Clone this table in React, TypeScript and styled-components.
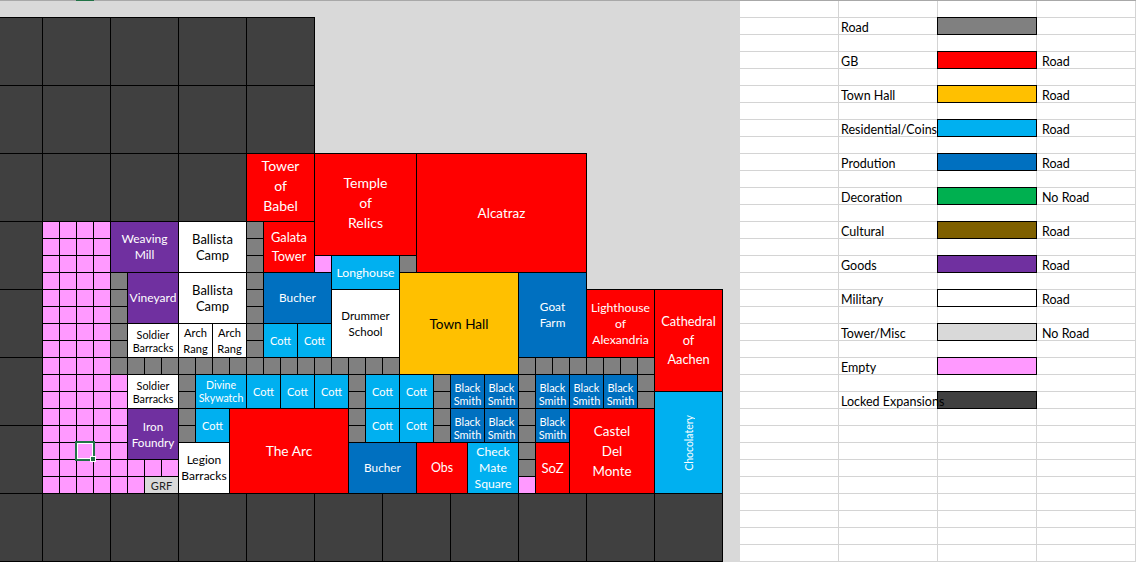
import React from 'react';
import styled, { createGlobalStyle } from 'styled-components';

const GlobalStyle = createGlobalStyle`
  html, body {
    margin: 0;
    padding: 0;
    background: #fff;
  }
`;

const Page = styled.div`
  width: 1136px;
  height: 562px;
  overflow: hidden;
  display: flex;
  flex-direction: column;
  font-family: Lato, 'Liberation Sans', sans-serif;
`;

const HeaderRule = styled.div`
  flex: none;
  height: 1px;
  display: flex;
  background: #a8a8a8;
`;

const ColumnMark = styled.div`
  margin-left: 76px;
  width: 18px;
  background: #217346;
`;

const Panes = styled.div`
  flex: 1;
  display: flex;
  min-height: 0;
`;

const MapPane = styled.div`
  flex: none;
  width: 740px;
  padding-top: 16px;
  box-sizing: border-box;
  background: #d9d9d9;
`;

const MapGrid = styled.div`
  display: grid;
  grid-template-columns: 42px repeat(40, 17px);
  grid-template-rows: repeat(32, 17px);
`;

interface Place {
  $c: number;
  $r: number;
  $w?: number;
  $h?: number;
}

// c = -1 is the cut-off strip on the left edge
const Tile = styled.div<Place & { $fill: string }>`
  grid-column: ${({ $c, $w = 1 }) => ($c < 0 ? '1 / span 1' : `${$c + 2} / span ${$w}`)};
  grid-row: ${({ $r, $h = 1 }) => `${$r + 1} / span ${$h}`};
  background: ${({ $fill }) => $fill};
  border: 1px solid #000;
  border-left-width: ${({ $c }) => ($c < 0 ? 0 : 1)}px;
  margin: 0 -1px -1px 0;
  box-sizing: border-box;
`;

const Building = styled(Tile)<{ $ink: string; $fs: number; $lh: number; $nudge: number }>`
  display: flex;
  align-items: center;
  justify-content: center;
  text-align: center;
  white-space: pre-line;
  color: ${({ $ink }) => $ink};
  font-size: ${({ $fs }) => $fs}px;
  line-height: ${({ $lh }) => $lh}px;
  padding-top: ${({ $nudge }) => Math.max($nudge, 0) * 2}px;
  padding-bottom: ${({ $nudge }) => Math.max(-$nudge, 0) * 2}px;
  overflow: visible;
`;

const VerticalLabel = styled.span`
  writing-mode: vertical-rl;
  transform: rotate(180deg);
`;

const ActiveCell = styled(Tile)`
  position: relative;
  z-index: 2;

  &::before {
    content: '';
    position: absolute;
    inset: -2px;
    border: 2px solid #217346;
    box-shadow: inset 0 0 0 1px #fff;
  }

  &::after {
    content: '';
    position: absolute;
    right: -3px;
    bottom: -3px;
    width: 6px;
    height: 6px;
    box-sizing: border-box;
    background: #217346;
    border: 1px solid #fff;
  }
`;

const Sheet = styled.div`
  flex: none;
  width: 396px;
  display: grid;
  grid-template-columns: repeat(4, 99px);
  grid-auto-rows: 17px;
  align-content: start;
  color: #000;
  font-size: 12.5px;
  line-height: 16px;
`;

const SheetCell = styled.div<{ $indent?: number }>`
  border-right: 1px solid #d4d4d4;
  border-bottom: 1px solid #d4d4d4;
  box-sizing: border-box;
  padding: 2px 0 0 ${({ $indent = 2 }) => $indent}px;
  white-space: nowrap;
`;

const CellText = styled.span`
  position: relative;
  z-index: 1;
`;

const Swatch = styled.div<{ $fill: string }>`
  margin: -1px 0 0 -1px;
  border: 1px solid #000;
  box-sizing: border-box;
  background: ${({ $fill }) => $fill};
`;

const COLORS = {
  red: ['#ff0000', '#fff'],
  gold: ['#ffc000', '#000'],
  sky: ['#00b0f0', '#fff'],
  blue: ['#0070c0', '#fff'],
  purple: ['#7030a0', '#fff'],
  white: ['#ffffff', '#000'],
  misc: ['#d9d9d9', '#222'],
} as const;

type Kind = keyof typeof COLORS;

interface Plot {
  name: string;
  c: number;
  r: number;
  w: number;
  h: number;
  kind: Kind;
  fs: number;
  lh?: number;
  nudge?: number;
  vertical?: boolean;
}

const range = (a: number, b: number) => Array.from({ length: b - a + 1 }, (_, i) => a + i);
type Spot = [number, number];
const row = (r: number, from: number, to: number): Spot[] => range(from, to).map((c) => [c, r]);
const col = (c: number, from: number, to: number): Spot[] => range(from, to).map((r) => [c, r]);

const LOCKED: Spot[] = [
  ...range(0, 7).map((i): Spot => [-1, i * 4]),
  ...[0, 4, 8, 12].flatMap((c): Spot[] => [[c, 0], [c, 4]]),
  [0, 8], [4, 8], [8, 8],
  ...range(0, 9).map((i): Spot => [i * 4, 28]),
];

const EMPTY: Spot[] = [
  ...range(12, 20).flatMap((r) => row(r, 0, 3)),
  ...range(21, 27).flatMap((r) => row(r, 0, 4)).filter(([c, r]) => !(c === 2 && r === 25)),
  ...row(26, 5, 7),
  [5, 27], [16, 14], [28, 27],
];

const ROADS: Spot[] = [
  ...col(12, 12, 19),
  ...col(4, 15, 19),
  ...row(20, 4, 20),
  [21, 14],
  ...row(20, 28, 35),
  ...col(8, 21, 24),
  ...col(18, 21, 24),
  ...col(23, 21, 24),
  ...col(28, 21, 26),
  ...col(35, 21, 22),
];

const cott = (c: number, r: number): Plot => ({ name: 'Cott', c, r, w: 2, h: 2, kind: 'sky', fs: 11 });
const smith = (c: number, r: number): Plot => ({
  name: 'Black\nSmith', c, r, w: 2, h: 2, kind: 'blue', fs: 11, lh: 13, nudge: 2,
});

const PLOTS: Plot[] = [
  { name: 'Tower\nof\nBabel', c: 12, r: 8, w: 4, h: 4, kind: 'red', fs: 14, lh: 20, nudge: -2 },
  { name: 'Temple\nof\nRelics', c: 16, r: 8, w: 6, h: 6, kind: 'red', fs: 14, lh: 20, nudge: -2 },
  { name: 'Alcatraz', c: 22, r: 8, w: 10, h: 7, kind: 'red', fs: 13.5 },
  { name: 'Weaving\nMill', c: 4, r: 12, w: 4, h: 3, kind: 'purple', fs: 12, lh: 16 },
  { name: 'Ballista\nCamp', c: 8, r: 12, w: 4, h: 3, kind: 'white', fs: 13, lh: 16 },
  { name: 'Galata\nTower', c: 13, r: 12, w: 3, h: 3, kind: 'red', fs: 12.8, lh: 19 },
  { name: 'Longhouse', c: 17, r: 14, w: 4, h: 2, kind: 'sky', fs: 12.2 },
  { name: 'Vineyard', c: 5, r: 15, w: 3, h: 3, kind: 'purple', fs: 12 },
  { name: 'Ballista\nCamp', c: 8, r: 15, w: 4, h: 3, kind: 'white', fs: 13, lh: 16 },
  { name: 'Bucher', c: 13, r: 15, w: 4, h: 3, kind: 'blue', fs: 11.8 },
  { name: 'Town Hall', c: 21, r: 15, w: 7, h: 6, kind: 'gold', fs: 13.6 },
  { name: 'Goat\nFarm', c: 28, r: 15, w: 4, h: 5, kind: 'blue', fs: 11.8, lh: 16 },
  { name: 'Lighthouse\nof\nAlexandria', c: 32, r: 16, w: 4, h: 4, kind: 'red', fs: 12.2, lh: 16 },
  { name: 'Cathedral\nof\nAachen', c: 36, r: 16, w: 4, h: 6, kind: 'red', fs: 12.8, lh: 19 },
  { name: 'Drummer\nSchool', c: 17, r: 16, w: 4, h: 4, kind: 'white', fs: 11.5, lh: 16 },
  { name: 'Soldier\nBarracks', c: 5, r: 18, w: 3, h: 2, kind: 'white', fs: 10.8, lh: 13 },
  { name: 'Arch\nRang', c: 8, r: 18, w: 2, h: 2, kind: 'white', fs: 11.1, lh: 16 },
  { name: 'Arch\nRang', c: 10, r: 18, w: 2, h: 2, kind: 'white', fs: 11.1, lh: 16 },
  cott(13, 18),
  cott(15, 18),
  { name: 'Soldier\nBarracks', c: 5, r: 21, w: 3, h: 2, kind: 'white', fs: 10.8, lh: 13 },
  { name: 'Divine\nSkywatch', c: 9, r: 21, w: 3, h: 2, kind: 'sky', fs: 10.6, lh: 13 },
  cott(12, 21),
  cott(14, 21),
  cott(16, 21),
  cott(19, 21),
  cott(21, 21),
  smith(24, 21),
  smith(26, 21),
  smith(29, 21),
  smith(31, 21),
  smith(33, 21),
  { name: 'Chocolatery', c: 36, r: 22, w: 4, h: 6, kind: 'sky', fs: 10.5, vertical: true },
  { name: 'Iron\nFoundry', c: 5, r: 23, w: 3, h: 3, kind: 'purple', fs: 11.7, lh: 16 },
  cott(9, 23),
  { name: 'The Arc', c: 11, r: 23, w: 7, h: 5, kind: 'red', fs: 13.8 },
  cott(19, 23),
  cott(21, 23),
  smith(24, 23),
  smith(26, 23),
  smith(29, 23),
  { name: 'Castel\nDel\nMonte', c: 31, r: 23, w: 5, h: 5, kind: 'red', fs: 13.4, lh: 20 },
  { name: 'Legion\nBarracks', c: 8, r: 25, w: 3, h: 3, kind: 'white', fs: 12, lh: 16 },
  { name: 'Bucher', c: 18, r: 25, w: 4, h: 3, kind: 'blue', fs: 11.8 },
  { name: 'Obs', c: 22, r: 25, w: 3, h: 3, kind: 'red', fs: 12.4 },
  { name: 'Check\nMate\nSquare', c: 25, r: 25, w: 3, h: 3, kind: 'sky', fs: 12.2, lh: 16 },
  { name: 'SoZ', c: 29, r: 25, w: 2, h: 3, kind: 'red', fs: 13.2 },
  { name: 'GRF', c: 6, r: 27, w: 2, h: 1, kind: 'misc', fs: 11.1, lh: 15 },
];

const LEGEND: [string, string, string][] = [
  ['Road', '#808080', ''],
  ['GB', '#ff0000', 'Road'],
  ['Town Hall', '#ffc000', 'Road'],
  ['Residential/Coins', '#00b0f0', 'Road'],
  ['Prodution', '#0070c0', 'Road'],
  ['Decoration', '#00b050', 'No Road'],
  ['Cultural', '#7f6000', 'Road'],
  ['Goods', '#7030a0', 'Road'],
  ['Military', '#ffffff', 'Road'],
  ['Tower/Misc', '#d9d9d9', 'No Road'],
  ['Empty', '#ff99ff', ''],
  ['Locked Expansions', '#404040', ''],
];

const SHEET_ROWS = 33;

function CityMap() {
  return (
    <MapGrid>
      {LOCKED.map(([c, r]) => (
        <Tile key={`l${c}-${r}`} $c={c} $r={r} $w={4} $h={4} $fill="#404040" />
      ))}
      {EMPTY.map(([c, r]) => (
        <Tile key={`e${c}-${r}`} $c={c} $r={r} $fill="#ff99ff" />
      ))}
      {ROADS.map(([c, r]) => (
        <Tile key={`r${c}-${r}`} $c={c} $r={r} $fill="#808080" />
      ))}
      {PLOTS.map((p) => {
        const [fill, ink] = COLORS[p.kind];
        return (
          <Building
            key={`${p.name}${p.c}-${p.r}`}
            $c={p.c}
            $r={p.r}
            $w={p.w}
            $h={p.h}
            $fill={fill}
            $ink={ink}
            $fs={p.fs}
            $lh={p.lh ?? 16}
            $nudge={p.nudge ?? 0}
          >
            {p.vertical ? <VerticalLabel>{p.name}</VerticalLabel> : p.name}
          </Building>
        );
      })}
      <ActiveCell $c={2} $r={25} $fill="#ff99ff" />
    </MapGrid>
  );
}

function Legend() {
  const cells: React.ReactNode[] = [];
  for (let r = 0; r < SHEET_ROWS; r += 1) {
    const entry = r % 2 === 1 ? LEGEND[(r - 1) / 2] : undefined;
    cells.push(<SheetCell key={`${r}a`} />);
    cells.push(
      <SheetCell key={`${r}b`}>{entry && <CellText>{entry[0]}</CellText>}</SheetCell>,
    );
    cells.push(entry ? <Swatch key={`${r}c`} $fill={entry[1]} /> : <SheetCell key={`${r}c`} />);
    cells.push(
      <SheetCell key={`${r}d`} $indent={5}>
        {entry && entry[2]}
      </SheetCell>,
    );
  }
  return <Sheet>{cells}</Sheet>;
}

export default function App() {
  return (
    <Page>
      <GlobalStyle />
      <HeaderRule>
        <ColumnMark />
      </HeaderRule>
      <Panes>
        <MapPane>
          <CityMap />
        </MapPane>
        <Legend />
      </Panes>
    </Page>
  );
}
